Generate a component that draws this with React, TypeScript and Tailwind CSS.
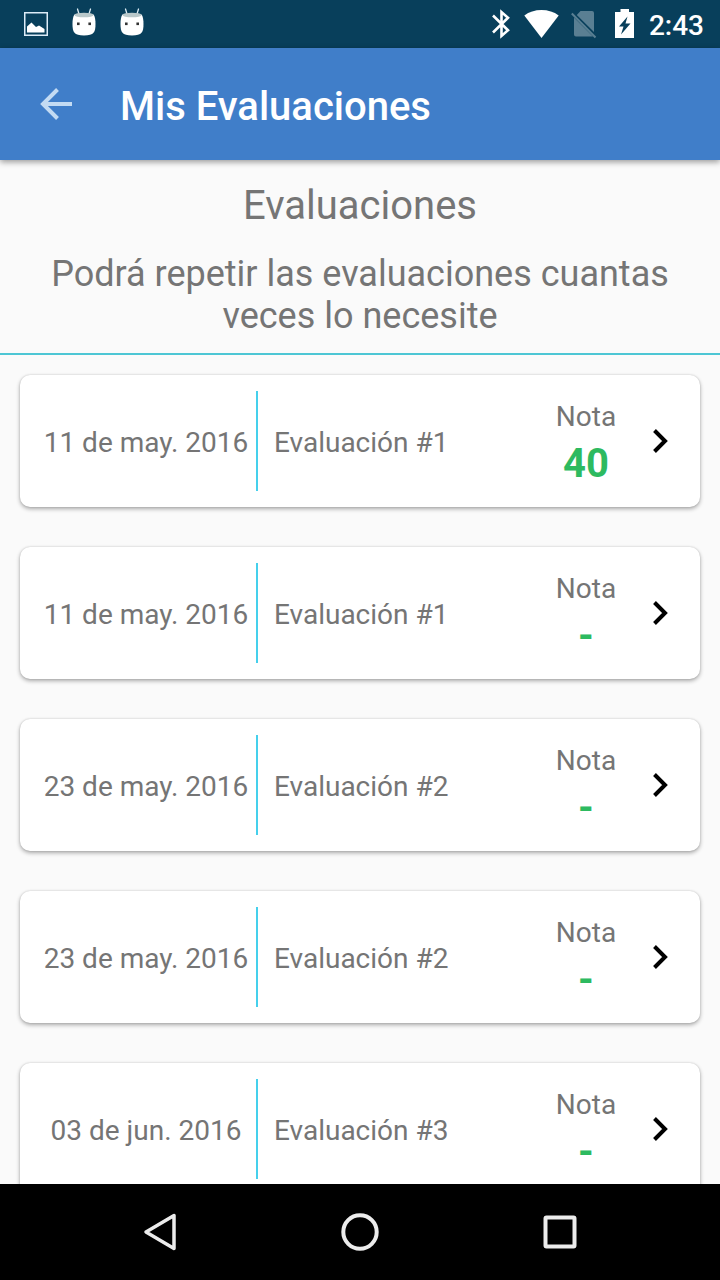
const evaluations = [
  { id: 1, date: "11 de may. 2016", name: "Evaluación #1", score: "40" },
  { id: 2, date: "11 de may. 2016", name: "Evaluación #1", score: "-" },
  { id: 3, date: "23 de may. 2016", name: "Evaluación #2", score: "-" },
  { id: 4, date: "23 de may. 2016", name: "Evaluación #2", score: "-" },
  { id: 5, date: "03 de jun. 2016", name: "Evaluación #3", score: "-" },
];

function PictureIcon() {
  return (
    <svg className="h-8 w-6" viewBox="0 0 24 32" aria-hidden="true">
      <rect x="0.75" y="4.75" width="22.5" height="22.5" fill="none" stroke="#dcecf8" strokeWidth="1.5" />
      <path d="M3 24.5V18.500l4.500-4 4.500 4.500 3-1.500 5.500 3.500v3.500z" fill="#fff" />
    </svg>
  );
}

function DroidIcon() {
  return (
    <svg className="h-8 w-6" viewBox="0 0 24 32" aria-hidden="true">
      <path d="M5.500 1l1.500 5M18.500 1l-1.500 5" stroke="#dcecf4" strokeWidth="1.300" strokeLinecap="round" />
      <path d="M2.500 6.500Q.5 9 .5 16c0 8 1.500 11.500 11.500 11.500S23.500 24 23.500 16q0-7-2-9.500z" fill="#fff" />
      <ellipse cx="12" cy="7" rx="9.500" ry="2.300" fill="#b9c8ca" />
      <rect x="5" y="14.500" width="2.600" height="2.600" fill="#333" />
      <rect x="16.400" y="14.500" width="2.600" height="2.600" fill="#333" />
    </svg>
  );
}

function StatusBar() {
  return (
    <div className="flex h-12 shrink-0 items-center justify-between bg-[#083f5b] pr-4 pl-6">
      <div className="flex gap-6">
        <PictureIcon />
        <DroidIcon />
        <DroidIcon />
      </div>
      <div className="flex items-center gap-2">
        <svg className="h-8 w-[30px]" viewBox="0 0 30 32" fill="none" stroke="#fff" strokeWidth="2.600" aria-hidden="true">
          <path d="M8 7.500l15 14.800L16.500 28V4L23 9.700 8 24.500" />
        </svg>
        <svg className="h-8 w-9" viewBox="0 0 36 32" aria-hidden="true">
          <path d="M1.300 7.500Q8.500 2 18.500 2t17.200 5.500L18.500 30z" fill="#fff" />
        </svg>
        <svg className="h-8 w-8" viewBox="0 0 32 32" aria-hidden="true">
          <path d="M13.500 3H25q2 0 2 2v19L9.800 7zM7 9.500L26 28.500H9q-2 0-2-2z" fill="#5a7f93" />
          <path d="M4.800 5.500L28.500 29.500" stroke="#5a7f93" strokeWidth="2" />
        </svg>
        <svg className="h-8 w-[34px]" viewBox="0 0 34 32" aria-hidden="true">
          <path d="M13.500 1h8.500v3h5v26H8V4h5.500z" fill="#fff" />
          <path d="M20.500 8.500L12 18.500h4.500L14 26.500l9.500-11h-5z" fill="#083f5b" />
        </svg>
        <span className="pt-1 text-[28px] leading-8 font-medium text-white">2:43</span>
      </div>
    </div>
  );
}

function AppBar() {
  return (
    <header className="relative z-10 flex h-28 shrink-0 items-center bg-[#407ec9] pl-8 shadow-[0_2px_6px_rgba(0,0,0,0.4)]">
      <button type="button" aria-label="Volver" className="mr-10 h-12 w-12">
        <svg className="h-12 w-12" viewBox="0 0 48 48" fill="none" stroke="#c3dbf3" strokeWidth="4" aria-hidden="true">
          <path d="M40 24H11M25.500 9.500L11 24l14.500 14.500" />
        </svg>
      </button>
      <h1 className="pt-[6px] text-[40px] leading-12 font-medium text-white">Mis Evaluaciones</h1>
    </header>
  );
}

function EvaluationCard({ date, name, score }: { date: string; name: string; score: string }) {
  return (
    <li>
      <button
        type="button"
        className="flex w-full items-center rounded-[10px] bg-white p-4 text-left text-[28px] leading-8 text-[#757575] shadow-[0_2px_4px_rgba(0,0,0,0.32),0_0_2px_rgba(0,0,0,0.16)]"
      >
        <span className="w-[220px] shrink-0 pt-1 text-center whitespace-nowrap">{date}</span>
        <span className="h-[100px] w-0.5 shrink-0 bg-[#45d0ec]" />
        <span className="flex-1 pt-1 pl-4">{name}</span>
        <span className="flex w-20 flex-col items-center pt-[6px]">
          <span>Nota</span>
          <span className="mt-[7px] text-[40px] leading-12 font-bold text-[#2dba60]">{score}</span>
        </span>
        <svg className="ml-[10px] h-12 w-12 shrink-0" viewBox="0 0 48 48" fill="none" stroke="#000" strokeWidth="4" aria-hidden="true">
          <path d="M18.500 13.500L29 24 18.500 34.500" />
        </svg>
      </button>
    </li>
  );
}

function NavigationBar() {
  return (
    <nav className="flex h-24 shrink-0 items-center justify-center gap-[152px] bg-black">
      <button type="button" aria-label="Atrás" className="h-12 w-12">
        <svg className="h-12 w-12" viewBox="0 0 48 48" fill="none" stroke="#ececec" strokeWidth="3.500" strokeLinejoin="round" aria-hidden="true">
          <path d="M38 7.500v33L10 24z" />
        </svg>
      </button>
      <button type="button" aria-label="Inicio" className="h-12 w-12">
        <svg className="h-12 w-12" viewBox="0 0 48 48" fill="none" stroke="#ececec" strokeWidth="4" aria-hidden="true">
          <circle cx="24" cy="24" r="16.700" />
        </svg>
      </button>
      <button type="button" aria-label="Recientes" className="h-12 w-12">
        <svg className="h-12 w-12" viewBox="0 0 48 48" fill="none" stroke="#ececec" strokeWidth="4" aria-hidden="true">
          <rect x="9.500" y="9.500" width="29" height="29" rx="1" />
        </svg>
      </button>
    </nav>
  );
}

export default function App() {
  return (
    <div className="flex h-screen flex-col bg-[#fafafa] font-[Roboto,sans-serif]">
      <StatusBar />
      <AppBar />
      <main className="flex min-h-0 flex-1 flex-col text-[#757575]">
        <section className="border-b-2 border-[#4dc6d4] px-8 pt-6 pb-4 text-center">
          <h2 className="text-[40px] leading-11">Evaluaciones</h2>
          <p className="mt-[25px] text-[36px] leading-[42px]">Podrá repetir las evaluaciones cuantas veces lo necesite</p>
        </section>
        <ul className="flex min-h-0 flex-1 flex-col gap-10 overflow-hidden px-5 pt-5">
          {evaluations.map((item) => (
            <EvaluationCard key={item.id} date={item.date} name={item.name} score={item.score} />
          ))}
        </ul>
      </main>
      <NavigationBar />
    </div>
  );
}
